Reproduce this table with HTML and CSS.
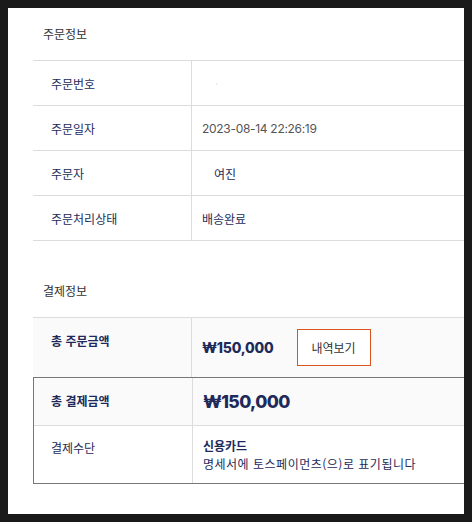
FILE: index.html
```html
<!DOCTYPE html>
<html lang="ko">
<head>
<meta charset="utf-8">
<link rel="stylesheet" href="styles.css">
</head>
<body>
<div class="panel">
  <div class="section-title first">주문정보</div>
  <div class="info-table">
    <div class="row">
      <div class="label">주문번호</div>
      <div class="value"><span class="ghost">·</span></div>
    </div>
    <div class="row">
      <div class="label">주문일자</div>
      <div class="value num gray">2023-08-14 22:26:19</div>
    </div>
    <div class="row">
      <div class="label">주문자</div>
      <div class="value"><span class="indent">여진</span></div>
    </div>
    <div class="row">
      <div class="label">주문처리상태</div>
      <div class="value">배송완료</div>
    </div>
  </div>

  <div class="section-title second">결제정보</div>
  <div class="pay-table">
    <div class="prow r1">
      <div class="plabel">총 주문금액</div>
      <div class="pvalue">
        <span class="amount">₩150,000</span>
        <button class="detail-btn">내역보기</button>
      </div>
    </div>
    <div class="outlined">
      <div class="prow r2">
        <div class="plabel">총 결제금액</div>
        <div class="pvalue"><span class="amount big">₩150,000</span></div>
      </div>
      <div class="prow r3">
        <div class="plabel normal">결제수단</div>
        <div class="pvalue stack">
          <span class="method">신용카드</span>
          <span class="note">명세서에 토스페이먼츠(으)로 표기됩니다</span>
        </div>
      </div>
    </div>
  </div>
</div>
</body>
</html>
```

FILE: styles.css
```css
html, body {
  margin: 0;
  padding: 0;
  background: #1a1a1a;
}
body {
  padding: 8px;
  font-family: "Noto Sans CJK KR", "Noto Sans", sans-serif;
  font-size: 12px;
  color: #1e2b5a;
}
.panel {
  width: 456px;
  height: 506px;
  background: #fff;
  overflow: hidden;
  padding-left: 25px;
  box-sizing: border-box;
}
.section-title {
  color: #333;
  padding-left: 10px;
  font-size: 12px;
}
.section-title.first {
  line-height: 52px;
}
.section-title.second {
  padding-top: 37px;
  padding-bottom: 13px;
  line-height: 26px;
}
.info-table {
  width: 480px;
  border-top: 1px solid #dcdcdc;
}
.row {
  display: grid;
  grid-template-columns: 159px 1fr;
  height: 45px;
  border-bottom: 1px solid #dcdcdc;
  box-sizing: border-box;
}
.label {
  padding-left: 18px;
  display: flex;
  align-items: center;
  border-right: 1px solid #dcdcdc;
}
.value {
  padding-left: 10px;
  display: flex;
  align-items: center;
}
.num {
  font-family: "Inter", "Noto Sans", sans-serif;
}
.gray {
  color: #555;
  font-size: 12px;
  letter-spacing: -0.3px;
}
.ghost {
  color: #e8e8e8;
  padding-left: 13px;
}
.indent {
  padding-left: 12px;
}
.pay-table {
  width: 480px;
  border-top: 1px solid #dcdcdc;
}
.prow {
  display: grid;
  grid-template-columns: 159px 1fr;
  box-sizing: border-box;
}
.r1 {
  height: 59px;
  background: #fafafa;
}
.outlined {
  border: 1px solid #777;
}
.r2 {
  height: 48px;
  background: #fafafa;
  border-bottom: 1px solid #dcdcdc;
}
.r3 {
  height: 57px;
  background: #fff;
}
.plabel {
  padding-left: 18px;
  padding-top: 14px;
  line-height: 18px;
  font-weight: bold;
  border-right: 1px solid #dcdcdc;
}
.r2 .plabel {
  padding-left: 17px;
  padding-top: 14px;
}
.r3 .plabel {
  padding-left: 17px;
  padding-top: 13px;
}
.plabel.normal {
  font-weight: normal;
}
.pvalue {
  padding-left: 10px;
  display: flex;
  align-items: center;
}
.amount {
  font-family: "Inter", "Noto Sans", sans-serif;
  font-weight: 800;
  font-size: 14px;
  color: #1e2b5a;
  letter-spacing: -0.2px;
}
.amount.big {
  font-size: 17.5px;
  letter-spacing: -0.6px;
}
.detail-btn {
  margin-left: 23px;
  width: 74px;
  height: 37px;
  background: #fff;
  border: 1px solid #d9541f;
  font-family: "Noto Sans CJK KR", sans-serif;
  font-size: 12px;
  color: #333;
  padding: 0;
}
.stack {
  flex-direction: column;
  align-items: flex-start;
  justify-content: center;
  line-height: 18px;
}
.method {
  font-weight: bold;
}
.note {
  letter-spacing: 0.5px;
}
```
